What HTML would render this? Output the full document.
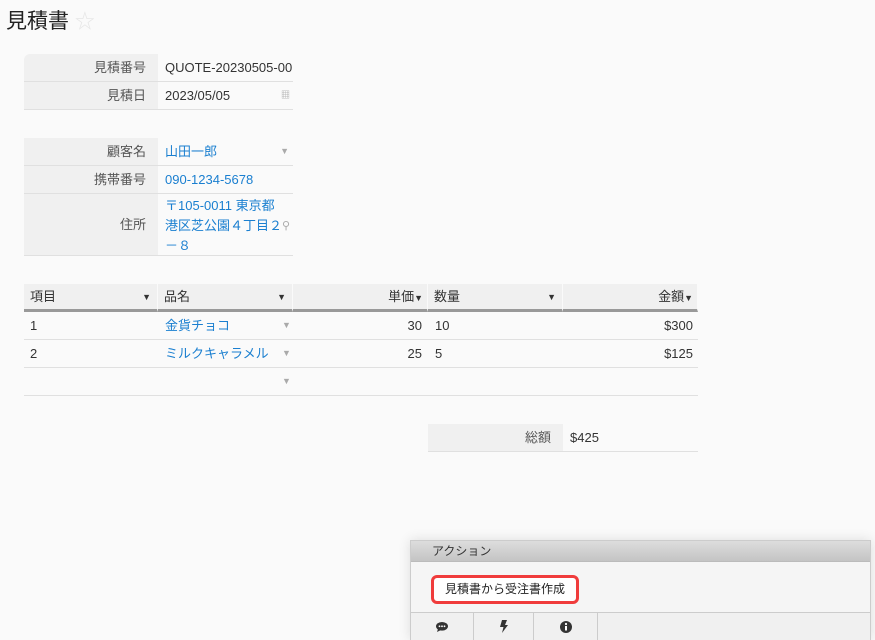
<!DOCTYPE html><html><head><meta charset="utf-8"><style>
*{margin:0;padding:0;box-sizing:border-box}
html{width:875px;height:640px;overflow:hidden}
body{width:875px;height:640px;background:#fafafa;font-family:"Liberation Sans","Noto Sans CJK JP",sans-serif;font-size:13px;color:#333;position:relative;overflow:hidden}
.a{position:absolute}
.lb{background:#f0f0f0;text-align:right;padding-right:12px;color:#555;border-bottom:1px solid #e0e0e0;line-height:27px}
.vl{padding-left:7px;border-bottom:1px solid #e0e0e0;line-height:27px;white-space:nowrap;overflow:hidden}
.bl{color:#1a7fd0}
.car{color:#aaa;font-size:9px}
.th{background:#f0f0f0;border-bottom:3px solid #999;line-height:26px;padding:0 6px;border-right:1px solid #fafafa}
.td{border-bottom:1px solid #e0e0e0;line-height:27px;padding:0 6px}
</style></head><body>
<div class="a" style="left:6px;top:5px;font-size:21px;color:#222">見積書 <span style="color:#e6e6e6;font-size:20px">☆</span></div>

<div class="a lb" style="left:24px;top:54px;width:134px;height:28px;border-top-left-radius:6px">見積番号</div>
<div class="a vl" style="left:158px;top:54px;width:135px;height:28px">QUOTE-20230505-001</div>
<div class="a lb" style="left:24px;top:82px;width:134px;height:28px">見積日</div>
<div class="a vl" style="left:158px;top:82px;width:135px;height:28px">2023/05/05<span class="car" style="position:absolute;right:3px">▦</span></div>

<div class="a lb" style="left:24px;top:138px;width:134px;height:28px">顧客名</div>
<div class="a vl bl" style="left:158px;top:138px;width:135px;height:28px">山田一郎<span class="car" style="position:absolute;right:4px">▼</span></div>
<div class="a lb" style="left:24px;top:166px;width:134px;height:28px">携帯番号</div>
<div class="a vl bl" style="left:158px;top:166px;width:135px;height:28px">090-1234-5678</div>
<div class="a lb" style="left:24px;top:194px;width:134px;height:62px;line-height:62px">住所</div>
<div class="a vl bl" style="left:158px;top:194px;width:135px;height:62px;line-height:20px;padding-top:2px;white-space:normal">〒105-0011 東京都<br>港区芝公園４丁目２<br>－８<span class="car" style="position:absolute;right:3px;top:22px;font-size:11px">⚲</span></div>

<div class="a th" style="left:24px;top:284px;width:134px;height:28px">項目<span style="float:right;font-size:9px">▼</span></div>
<div class="a th" style="left:158px;top:284px;width:135px;height:28px">品名<span style="float:right;font-size:9px">▼</span></div>
<div class="a th" style="left:293px;top:284px;width:135px;height:28px;text-align:right;padding-right:4px">単価<span style="font-size:9px">▼</span></div>
<div class="a th" style="left:428px;top:284px;width:135px;height:28px">数量<span style="float:right;font-size:9px">▼</span></div>
<div class="a th" style="left:563px;top:284px;width:135px;height:28px;text-align:right;padding-right:4px">金額<span style="font-size:9px">▼</span></div>

<div class="a td" style="left:24px;top:312px;width:674px;height:28px"></div>
<div class="a td" style="left:24px;top:340px;width:674px;height:28px"></div>
<div class="a td" style="left:24px;top:368px;width:674px;height:28px"></div>
<div class="a" style="left:30px;top:312px;line-height:27px">1</div>
<div class="a" style="left:30px;top:340px;line-height:27px">2</div>
<div class="a bl" style="left:165px;top:312px;line-height:27px">金貨チョコ</div>
<div class="a bl" style="left:165px;top:340px;line-height:27px">ミルクキャラメル</div>
<div class="a car" style="left:282px;top:312px;line-height:27px">▼</div>
<div class="a car" style="left:282px;top:340px;line-height:27px">▼</div>
<div class="a car" style="left:282px;top:368px;line-height:27px">▼</div>
<div class="a" style="left:293px;top:312px;width:129px;text-align:right;line-height:27px">30</div>
<div class="a" style="left:293px;top:340px;width:129px;text-align:right;line-height:27px">25</div>
<div class="a" style="left:435px;top:312px;line-height:27px">10</div>
<div class="a" style="left:435px;top:340px;line-height:27px">5</div>
<div class="a" style="left:563px;top:312px;width:130px;text-align:right;line-height:27px">$300</div>
<div class="a" style="left:563px;top:340px;width:130px;text-align:right;line-height:27px">$125</div>

<div class="a lb" style="left:428px;top:424px;width:135px;height:28px">総額</div>
<div class="a vl" style="left:563px;top:424px;width:135px;height:28px">$425</div>

<div class="a" style="left:410px;top:540px;width:461px;height:100px;border:1px solid #ccc;border-bottom:none;background:#f5f5f5;box-shadow:0 0 12px rgba(0,0,0,.12);overflow:hidden">
<div style="height:21px;background:linear-gradient(#ddd,#c4c4c4);line-height:21px;padding-left:21px;font-size:12px;color:#333;border-bottom:1px solid #bbb">アクション</div>
<div style="position:absolute;left:20px;top:34px;width:148px;height:29px;border:3px solid #f03c3c;border-radius:6px;background:#fff;font-size:12px;line-height:23px;text-align:center;color:#222">見積書から受注書作成</div>
<div style="position:absolute;left:0;top:71px;width:100%;height:40px;border-top:1px solid #ccc;background:#f0f0f0">
<div style="position:absolute;left:62px;top:0;width:1px;height:30px;background:#ccc"></div>
<div style="position:absolute;left:122px;top:0;width:1px;height:30px;background:#ccc"></div>
<div style="position:absolute;left:186px;top:0;width:1px;height:30px;background:#ccc"></div>
<svg style="position:absolute;left:25px;top:9px" width="12" height="10" viewBox="0 0 12 10"><ellipse cx="6" cy="4.3" rx="6" ry="4.3" fill="#333"/><path d="M2 7 L1 10 L5 8Z" fill="#333"/><circle cx="3.5" cy="4.3" r=".9" fill="#fff"/><circle cx="6" cy="4.3" r=".9" fill="#fff"/><circle cx="8.5" cy="4.3" r=".9" fill="#fff"/></svg>
<svg style="position:absolute;left:89px;top:7px" width="8" height="13" viewBox="0 0 8 13"><path d="M2 0H7L5 5H8L2 13L3.5 7H0Z" fill="#333"/></svg>
<svg style="position:absolute;left:149px;top:8px" width="12" height="12" viewBox="0 0 12 12"><circle cx="6" cy="6" r="6" fill="#333"/><rect x="5" y="5" width="2" height="4.5" fill="#fff"/><circle cx="6" cy="3" r="1.1" fill="#fff"/></svg>
</div></div>
</body></html>
